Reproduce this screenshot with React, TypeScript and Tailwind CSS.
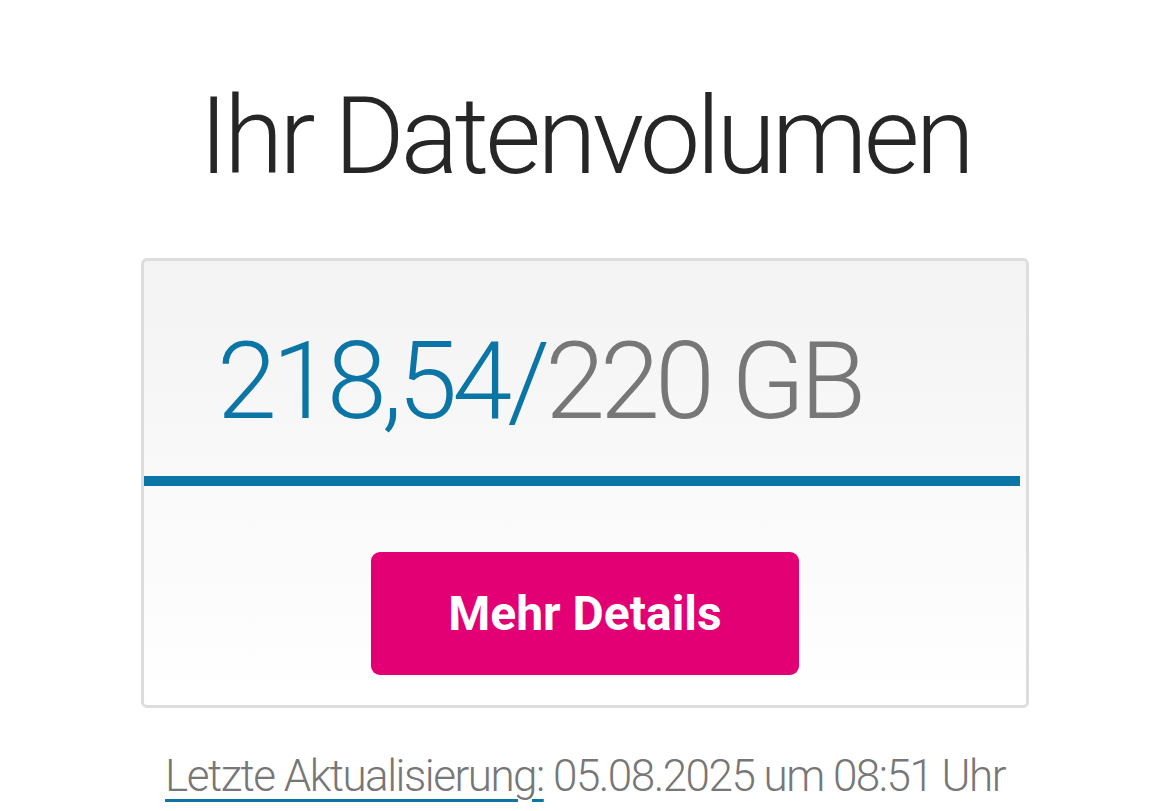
export default function App() {
  const used = 218.54;
  const total = 220;
  const pct = (used / total) * 100;

  return (
    <div className="min-h-[811px] w-full bg-white font-['Roboto',sans-serif]">
      <h1 className="pt-[72px] text-center text-[108px] font-light leading-[128px] tracking-[-4px] text-[#262626]">
        Ihr Datenvolumen
      </h1>

      <div className="mx-auto mt-[58px] w-[888px] overflow-hidden rounded-[6px] border-[3px] border-[#dddddd] bg-gradient-to-b from-[#f3f3f3] to-white">
        <div className="h-[215px] pl-[73px] pt-[60px] text-[108px] font-light leading-[120px] tracking-[-5px]">
          <span className="text-[#0b76a6]">218,54/</span>
          <span className="text-[#777777]">220 GB</span>
        </div>
        <div className="h-[10px] w-full">
          <div className="h-full bg-[#0b76a6]" style={{ width: `${pct}%` }} />
        </div>
        <div className="flex justify-center pb-[30px] pt-[66px]">
          <button
            type="button"
            className="h-[123px] w-[428px] rounded-[9px] bg-[#e20074] text-[48px] font-bold text-white"
          >
            Mehr Details
          </button>
        </div>
      </div>

      <p className="mt-[42px] text-center text-[44px] font-light leading-[52px] tracking-[-1.5px] text-[#777777]">
        <span className="underline decoration-[#0b76a6] decoration-[3px] underline-offset-[8px]">
          Letzte Aktualisierung:
        </span>{" "}
        05.08.2025 um 08:51 Uhr
      </p>
    </div>
  );
}
